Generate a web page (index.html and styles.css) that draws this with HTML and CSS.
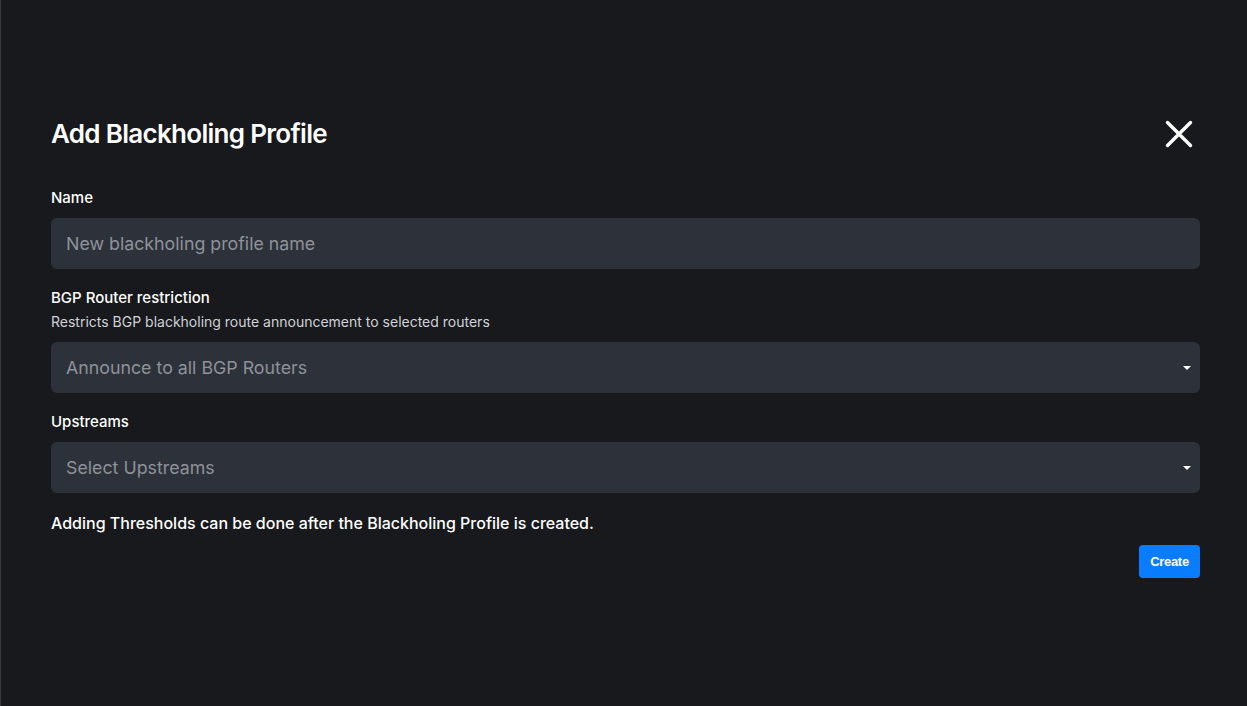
FILE: index.html
```html
<!DOCTYPE html>
<html>
<head>
<meta charset="utf-8">
<link rel="stylesheet" href="styles.css">
</head>
<body>
<div class="page">
  <div class="modal">
    <div class="header">
      <h1 class="title">Add Blackholing Profile</h1>
      <button class="close" aria-label="Close">
        <svg width="28" height="28" viewBox="0 0 28 28"><path d="M2.5 2.5 L25.5 25.5 M25.5 2.5 L2.5 25.5" stroke="#fff" stroke-width="3.4" stroke-linecap="round"/></svg>
      </button>
    </div>
    <div class="field">
      <label class="label">Name</label>
      <div class="input"><span class="placeholder">New blackholing profile name</span></div>
    </div>
    <div class="field">
      <label class="label">BGP Router restriction</label>
      <div class="hint">Restricts BGP blackholing route announcement to selected routers</div>
      <div class="input select"><span class="placeholder">Announce to all BGP Routers</span><span class="caret"></span></div>
    </div>
    <div class="field">
      <label class="label">Upstreams</label>
      <div class="input select"><span class="placeholder">Select Upstreams</span><span class="caret"></span></div>
    </div>
    <p class="note">Adding Thresholds can be done after the Blackholing Profile is created.</p>
    <div class="actions"><button class="btn">Create</button></div>
  </div>
</div>
</body>
</html>
```
FILE: styles.css
```css
html, body { margin: 0; padding: 0; height: 100%; }
body {
  background: #18191d;
  font-family: Inter, "Noto Sans", sans-serif;
  color: #fff;
}
.page {
  height: 100%;
  box-sizing: border-box;
  border-left: 1px solid #3a3c42;
  padding: 117px 47px 0 50px;
}
.modal { display: flex; flex-direction: column; }
.header {
  display: flex;
  justify-content: space-between;
  align-items: center;
  height: 34px;
  margin-bottom: 38px;
}
.title {
  margin: 0;
  font-size: 26px;
  font-weight: 600;
  letter-spacing: -0.7px;
  line-height: 34px;
}
.close {
  background: none;
  border: 0;
  padding: 0;
  margin-right: 7px;
  width: 28px;
  height: 28px;
  display: flex;
}
.field { display: flex; flex-direction: column; margin-bottom: 20px; }
.label {
  font-size: 15px;
  font-weight: 500;
  line-height: 18px;
  margin-bottom: 11px;
}
.hint {
  font-size: 14px;
  color: #d0d2d6;
  line-height: 18px;
  margin-top: -5px;
  margin-bottom: 11px;
}
.input {
  height: 51px;
  background: #2d3139;
  border-radius: 6px;
  display: flex;
  align-items: center;
  padding: 0 9px 0 15px;
  justify-content: space-between;
}
.placeholder {
  font-size: 17.8px;
  color: #8e9299;
}
.caret {
  width: 0; height: 0;
  border-left: 4px solid transparent;
  border-right: 4px solid transparent;
  border-top: 4px solid #fff;
}
.note {
  margin: 0 0 12px;
  font-size: 16px;
  font-weight: 500;
  line-height: 20px;
}
.actions { display: flex; justify-content: flex-end; }
.btn {
  background: #0a7cff;
  color: #fff;
  border: 0;
  border-radius: 4px;
  height: 33px;
  width: 61px;
  font-family: "Liberation Sans", Arial, sans-serif;
  font-weight: 700;
  font-size: 13px;
  letter-spacing: -0.3px;
  padding: 0;
}
```
